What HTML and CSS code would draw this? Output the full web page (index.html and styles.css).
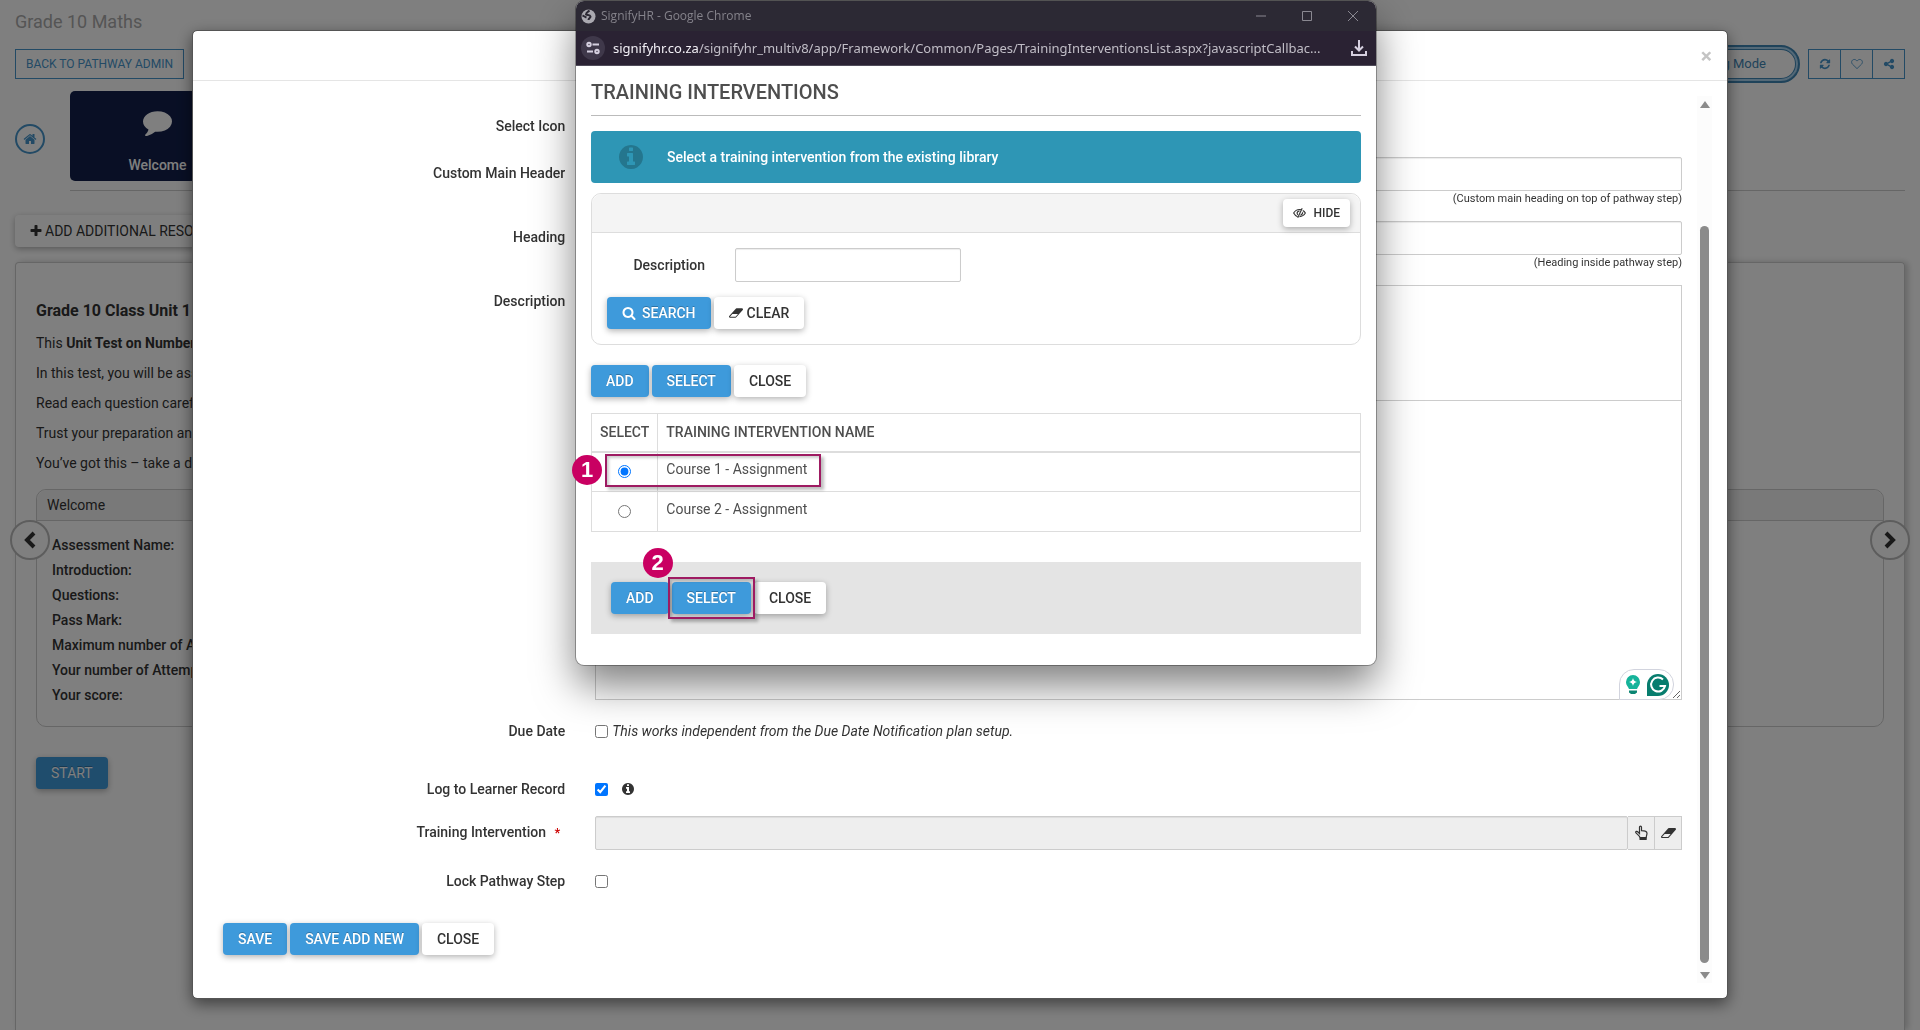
FILE: index.html
```html
<!DOCTYPE html>
<html lang="en">
<head>
    <meta charset="UTF-8">
    <meta name="viewport" content="width=device-width, initial-scale=1.0">
    <title>Grade 10 Maths</title>
    <link rel="stylesheet" href="styles.css">
</head>
<body>
    <!-- shared icons -->
    <svg class="sprite" aria-hidden="true">
        <symbol id="home" viewBox="0 0 1792 1792"><path d="M1472 992v480q0 26-19 45t-45 19h-384v-384h-256v384h-384q-26 0-45-19t-19-45v-480q0-1 .5-3t.5-3l575-474 575 474q1 2 1 6zm223-69l-62 74q-8 9-21 11h-3q-13 0-21-7l-692-577-692 577q-12 8-24 7-13-2-21-11l-62-74q-8-10-7-23.5t11-21.5l719-599q32-26 76-26t76 26l244 204v-195q0-14 9-23t23-9h192q14 0 23 9t9 23v408l219 182q10 8 11 21.5t-7 23.5z"/></symbol>
        <symbol id="comment" viewBox="0 0 1792 1792"><path d="M1792 896q0 174-120 321.5t-326 233-450 85.5q-70 0-145-8-198 175-460 242-49 14-114 22-17 2-30.5-9t-17.5-29v-1q-3-4-.5-12t2-10 4.5-9.5l6-9 7-8.5 8-9q7-8 31-34.5t34.5-38 31-39.5 32.5-51 27-59 26-76q-157-89-247.5-220t-90.5-281q0-130 71-248.5t191-204.5 286-136.5 348-50.5q244 0 450 85.5t326 233 120 321.5z"/></symbol>
        <symbol id="plus" viewBox="0 0 1792 1792"><path d="M1600 736v192q0 40-28 68t-68 28h-416v416q0 40-28 68t-68 28h-192q-40 0-68-28t-28-68v-416h-416q-40 0-68-28t-28-68v-192q0-40 28-68t68-28h416v-416q0-40 28-68t68-28h192q40 0 68 28t28 68v416h416q40 0 68 28t28 68z"/></symbol>
        <symbol id="info" viewBox="0 0 1792 1792"><path d="M1152 1376v-160q0-14-9-23t-23-9h-96v-512q0-14-9-23t-23-9h-320q-14 0-23 9t-9 23v160q0 14 9 23t23 9h96v320h-96q-14 0-23 9t-9 23v160q0 14 9 23t23 9h448q14 0 23-9t9-23zm-128-896v-160q0-14-9-23t-23-9h-192q-14 0-23 9t-9 23v160q0 14 9 23t23 9h192q14 0 23-9t9-23zm640 416q0 209-103 385.5t-279.5 279.5-385.5 103-385.5-103-279.5-279.5-103-385.5 103-385.5 279.5-279.5 385.5-103 385.5 103 279.5 279.5 103 385.5z"/></symbol>
        <symbol id="search" viewBox="0 0 1792 1792"><path d="M1216 832q0-185-131.5-316.5t-316.5-131.5-316.5 131.5-131.5 316.5 131.5 316.5 316.5 131.5 316.5-131.5 131.5-316.5zm512 832q0 52-38 90t-90 38q-54 0-90-38l-343-342q-179 124-399 124-143 0-273.5-55.5t-225-150-150-225-55.5-273.5 55.5-273.5 150-225 225-150 273.5-55.5 273.5 55.5 225 150 150 225 55.5 273.5q0 220-124 399l343 343q37 37 37 90z"/></symbol>
        <symbol id="eraser" viewBox="0 0 1920 1792"><path d="M896 1408l336-384h-768l-336 384h768zm1013-1077q15 34 9.5 71.5t-30.5 65.5l-896 1024q-38 44-96 44h-768q-38 0-69.5-20.5t-47.5-54.5q-15-34-9.5-71.5t30.5-65.5l896-1024q38-44 96-44h768q38 0 69.5 20.5t47.5 54.5z"/></symbol>
        <symbol id="refresh" viewBox="0 0 1792 1792"><path d="M1639 1056q0 5-1 7-64 268-268 434.5t-478 166.5q-146 0-282.5-55t-243.5-157l-129 129q-19 19-45 19t-45-19-19-45v-448q0-26 19-45t45-19h448q26 0 45 19t19 45-19 45l-137 137q71 66 161 102t187 36q134 0 250-65t186-179q11-17 53-117 8-23 30-23h192q13 0 22.5 9.5t9.5 22.5zm25-800v448q0 26-19 45t-45 19h-448q-26 0-45-19t-19-45 19-45l138-138q-148-137-349-137-134 0-250 65t-186 179q-11 17-53 117-8 23-30 23h-199q-13 0-22.5-9.5t-9.5-22.5v-7q65-268 270-434.5t480-166.5q146 0 284 55.5t245 156.5l130-129q19-19 45-19t45 19 19 45z"/></symbol>
        <symbol id="heart" viewBox="0 0 14 14"><path d="M7 12.4L1.6 7.1C.1 5.500.4 2 3.700 1.700 5.300 1.600 6.300 2.700 7 3.600 7.700 2.700 8.700 1.600 10.300 1.700 13.600 2 13.900 5.500 12.400 7.100z" fill="none" stroke="currentColor"/></symbol>
        <symbol id="share" viewBox="0 0 1792 1792"><path d="M1344 1024q133 0 226.5 93.5t93.5 226.5-93.5 226.5-226.5 93.5-226.5-93.5-93.5-226.5q0-12 2-34l-360-180q-92 86-218 86-133 0-226.5-93.5t-93.5-226.5 93.5-226.5 226.5-93.5q126 0 218 86l360-180q-2-22-2-34 0-133 93.5-226.5t226.500-93.500 226.500 93.500 93.500 226.500-93.500 226.500-226.500 93.500q-126 0-218-86l-360 180q2 22 2 34t-2 34l360 180q92-86 218-86z"/></symbol>
        <symbol id="eye" viewBox="0 0 14 12"><g fill="none" stroke="currentColor"><path d="M5 10C3.200 9.300 1.800 8.100.700 6 2.200 3.500 4.400 2.200 7 2.200c.8 0 1.300.1 2 .3M10.500 3.300C11.700 3.900 12.600 4.800 13.300 6c-1.500 2.500-3.700 3.800-6.300 3.900" stroke-width="1.200"/><path d="M9.900 1L5.100 11" stroke-width="1.200"/><path d="M5.300 8C3.800 6.600 4.200 4.200 7 3.700M10.400 5.200C10.400 7 9.300 8.100 8 8.400" stroke-width="1.300"/></g></symbol>
        <symbol id="hand" viewBox="0 0 14 16"><path d="M5 8.600V2.300C5 .8 7 .8 7 2.300v3.300c2.200 0 5.400.5 5.500 2.600 0 1.600-.8 2.700-.8 4.500H5.600C5.200 10.700 2.500 9.300 1.300 7.700.8 6.300 2.500 5.800 3.500 7z" fill="none" stroke="currentColor" stroke-width="1.200"/><path d="M5 12.400h7.200V15H5z"/></symbol>
        <symbol id="chevron" viewBox="0 0 14 18"><path d="M11 2L4 9l7 7" fill="none" stroke="currentColor" stroke-width="4"/></symbol>
    </svg>

    <main class="page">
        <h1 class="page-title">Grade 10 Maths</h1>
        <div class="toolbar">
            <div class="toolbar-group">
                <button type="button" class="btn-outline">BACK TO PATHWAY ADMIN</button>
                <button type="button" class="btn-outline">EDIT</button>
            </div>
            <div class="toolbar-group">
                <button type="button" class="btn-mode">Editing Mode</button>
                <div class="icon-group">
                    <button type="button" aria-label="Refresh"><svg class="icon"><use href="#refresh"/></svg></button>
                    <button type="button" aria-label="Favourite"><svg class="icon"><use href="#heart"/></svg></button>
                    <button type="button" aria-label="Share"><svg class="icon"><use href="#share"/></svg></button>
                </div>
            </div>
        </div>

        <div class="steps">
            <a href="#" class="home-link" aria-label="Home"><svg class="icon-lg"><use href="#home"/></svg></a>
            <div class="step-list">
                <a href="#" class="step">
                    <svg class="step-icon"><use href="#comment"/></svg>
                    <span>Welcome</span>
                </a>
            </div>
        </div>

        <button type="button" class="btn btn-resource"><svg class="icon"><use href="#plus"/></svg>ADD ADDITIONAL RESOURCES</button>

        <section class="content">
            <h2>Grade 10 Class Unit 1</h2>
            <p>This <b>Unit Test on Numbers</b></p>
            <p>In this test, you will be assessed</p>
            <p>Read each question carefully</p>
            <p>Trust your preparation and</p>
            <p>You’ve got this – take a deep</p>
            <div class="card">
                <div class="card-head">Welcome</div>
                <ul>
                    <li>Assessment Name:</li>
                    <li>Introduction:</li>
                    <li>Questions:</li>
                    <li>Pass Mark:</li>
                    <li>Maximum number of Attempts:</li>
                    <li>Your number of Attempts:</li>
                    <li>Your score:</li>
                </ul>
            </div>
            <button type="button" class="btn btn-primary btn-start">START</button>
        </section>
        <button type="button" class="pager prev" aria-label="Previous"><svg><use href="#chevron"/></svg></button>
        <button type="button" class="pager next" aria-label="Next"><svg><use href="#chevron"/></svg></button>
    </main>

    <div class="overlay">
        <div class="modal" role="dialog">
            <div class="modal-header"><button type="button" class="modal-close" aria-label="Dismiss">×</button></div>
            <div class="modal-body">
                <form>
                    <div class="form-row icon-row">
                        <span class="label">Select Icon</span>
                    </div>
                    <div class="form-row">
                        <label class="label" for="main-header">Custom Main Header</label>
                        <div class="field">
                            <input type="text" id="main-header">
                            <small>(Custom main heading on top of pathway step)</small>
                        </div>
                    </div>
                    <div class="form-row">
                        <label class="label" for="heading">Heading</label>
                        <div class="field">
                            <input type="text" id="heading">
                            <small>(Heading inside pathway step)</small>
                        </div>
                    </div>
                    <div class="form-row">
                        <label class="label" for="description">Description</label>
                        <div class="field editor">
                            <div class="editor-bar"></div>
                            <textarea id="description"></textarea>
                            <div class="writing-badge">
                                <svg width="16" height="20" viewBox="0 0 16 20"><path d="M8 0a7 7 0 0 0-7 7.300c0 3 2 4.200 3 6.700h8c1-2.500 3-3.700 3-6.700A7 7 0 0 0 8 0z" fill="#15b39a"/><path d="M8 3q.6 3.400 4 4-3.400.6-4 4-.6-3.400-4-4 3.400-.6 4-4z" fill="#fff"/><path d="M4 15.500h8v2l-2 1.500H6l-2-1.500z" fill="#0b8573"/></svg>
                                <svg width="22" height="22" viewBox="0 0 22 22"><path d="M0 22V11A11 11 0 1 1 11 22z" fill="#077d6e"/><path d="M16 5.500A7 7 0 1 0 18 12h-5.500" fill="none" stroke="#fff" stroke-width="2"/></svg>
                            </div>
                        </div>
                    </div>
                    <div class="form-row due-row">
                        <label class="label" for="due">Due Date</label>
                        <div class="field inline">
                            <input type="checkbox" id="due">
                            <em>This works independent from the Due Date Notification plan setup.</em>
                        </div>
                    </div>
                    <div class="form-row log-row">
                        <label class="label" for="log">Log to Learner Record</label>
                        <div class="field inline">
                            <input type="checkbox" id="log" checked>
                            <svg class="icon info-icon"><use href="#info"/></svg>
                        </div>
                    </div>
                    <div class="form-row">
                        <label class="label" for="intervention">Training Intervention <span class="required">*</span></label>
                        <div class="field input-group">
                            <input type="text" id="intervention" readonly>
                            <button type="button" aria-label="Choose"><svg class="icon-lg"><use href="#hand"/></svg></button>
                            <button type="button" aria-label="Erase"><svg class="icon-lg"><use href="#eraser"/></svg></button>
                        </div>
                    </div>
                    <div class="form-row due-row">
                        <label class="label" for="lock">Lock Pathway Step</label>
                        <div class="field inline"><input type="checkbox" id="lock"></div>
                    </div>
                    <div class="btn-row form-actions">
                        <button type="button" class="btn btn-primary">SAVE</button>
                        <button type="button" class="btn btn-primary">SAVE ADD NEW</button>
                        <button type="button" class="btn">CLOSE</button>
                    </div>
                </form>
                <div class="scrollbar" aria-hidden="true">
                    <i class="arrow up"></i>
                    <i class="thumb"></i>
                    <i class="arrow down"></i>
                </div>
            </div>
        </div>
    </div>

    <div class="popup">
        <div class="titlebar">
            <svg width="15" height="15" viewBox="0 0 15 15"><circle cx="7.500" cy="7.500" r="7" fill="#aaa9b0"/><path d="M8.500 1.500C6.500 3 5 3.500 5 5.500c1.500 1 4-.2 4.500 2 .3 1.500-2 1.500-2 3.500M1.500 6.500C3 7 4 8 5.500 8.500" fill="none" stroke="#2b2833" stroke-width="2"/></svg>
            <span class="window-name">SignifyHR - Google Chrome</span>
            <div class="window-controls">
                <svg viewBox="0 0 10 10"><path d="M0 5h10"/></svg>
                <svg viewBox="0 0 10 10"><path d="M.5.5h9v9h-9z"/></svg>
                <svg viewBox="0 0 10 10"><path d="M0 0l10 10M10 0L0 10"/></svg>
            </div>
        </div>
        <div class="urlbar">
            <span class="site-icon"><svg width="14" height="14" viewBox="0 0 14 14"><path d="M6.500 3.500H13M1 10.500h6" /><circle cx="3" cy="3.500" r="1.700"/><circle cx="11" cy="10.500" r="1.700"/></svg></span>
            <span class="url"><b>signifyhr.co.za</b>/signifyhr_multiv8/app/Framework/Common/Pages/TrainingInterventionsList.aspx?javascriptCallbac...</span>
            <svg class="download" width="16" height="16" viewBox="0 0 16 16"><path d="M8 0v10M4 6.500l4 4 4-4M1 11v4h14v-4"/></svg>
        </div>

        <div class="popup-body">
            <h2>TRAINING INTERVENTIONS</h2>
            <div class="banner">
                <svg><use href="#info"/></svg>
                <span>Select a training intervention from the existing library</span>
            </div>

            <div class="filter">
                <div class="filter-head">
                    <button type="button" class="btn btn-small"><svg class="icon"><use href="#eye"/></svg>HIDE</button>
                </div>
                <div class="filter-body">
                    <div class="filter-field">
                        <label for="filter-description">Description</label>
                        <input type="text" id="filter-description">
                    </div>
                    <div class="btn-row">
                        <button type="button" class="btn btn-primary btn-search"><svg class="icon"><use href="#search"/></svg>SEARCH</button>
                        <button type="button" class="btn btn-clear"><svg class="icon"><use href="#eraser"/></svg>CLEAR</button>
                    </div>
                </div>
            </div>

            <div class="btn-row list-actions">
                <button type="button" class="btn btn-primary">ADD</button>
                <button type="button" class="btn btn-primary">SELECT</button>
                <button type="button" class="btn">CLOSE</button>
            </div>

            <div class="table-wrap">
                <table>
                    <thead>
                        <tr><th>SELECT</th><th>TRAINING INTERVENTION NAME</th></tr>
                    </thead>
                    <tbody>
                        <tr>
                            <td class="pick"><input type="radio" name="course" id="course1" checked></td>
                            <td><label for="course1">Course 1 - Assignment</label></td>
                        </tr>
                        <tr>
                            <td class="pick"><input type="radio" name="course" id="course2"></td>
                            <td><label for="course2">Course 2 - Assignment</label></td>
                        </tr>
                    </tbody>
                </table>
                <div class="marker marker-row"></div>
                <span class="badge badge-row">1</span>
            </div>

            <div class="btn-row popup-footer">
                <button type="button" class="btn btn-primary">ADD</button>
                <div class="marked">
                    <button type="button" class="btn btn-primary">SELECT</button>
                    <div class="marker marker-select"></div>
                    <span class="badge badge-select">2</span>
                </div>
                <button type="button" class="btn">CLOSE</button>
            </div>
        </div>
    </div>
</body>
</html>
```

FILE: styles.css
```css
* { box-sizing: border-box; }

body {
    margin: 0;
    height: 100vh;
    overflow: hidden;
    font-family: Roboto, "Liberation Sans", sans-serif;
    font-size: 14px;
    line-height: 20px;
    color: #333;
    background: #fff;
}

button, input, textarea {
    font: inherit;
    color: inherit;
}
button { cursor: pointer; }
h1, h2, p, ul { margin: 0; padding: 0; }
a { text-decoration: none; }

.sprite { position: absolute; width: 0; height: 0; }
svg { fill: currentColor; flex: none; }
.icon { width: 14px; height: 14px; }
.icon-lg { width: 16px; height: 16px; }

/* buttons */
.btn {
    display: inline-flex;
    align-items: center;
    height: 32px;
    padding: 0 15px;
    border: none;
    border-radius: 4px;
    background: #fff;
    color: #333;
    white-space: nowrap;
    font-weight: 500;
    box-shadow: 0 2px 6px rgba(0, 0, 0, 0.3);
}
.btn-primary {
    background: #3e9adb;
    color: #fff;
    text-shadow: 0 -1px 0 rgba(0, 0, 0, 0.25);
}
.btn-row { display: flex; gap: 3px; }
.btn-small {
    height: 28px;
    padding: 0 10px;
    gap: 7px;
    font-size: 12px;
}
.btn-small .icon { width: 13px; }
.btn-clear { gap: 4px; }
.btn-search { gap: 6px; }

/* page behind the dialog */
.page {
    position: relative;
    height: 100%;
    display: flex;
    flex-direction: column;
    padding: 7px 15px 0;
}
.page-title {
    font-size: 18px;
    line-height: 30px;
    font-weight: 400;
    color: #aaa;
}
.toolbar {
    display: flex;
    justify-content: space-between;
    margin-top: 8px;
    height: 38px;
    align-items: center;
}
.toolbar-group { display: flex; align-items: center; gap: 8px; }
.btn-outline {
    height: 30px;
    padding: 0 10px;
    border: 1px solid #4695cb;
    background: none;
    color: #4695cb;
    font-size: 12px;
}
.btn-mode {
    height: 38px;
    padding: 0 32px;
    border: 2px solid #3f86b5;
    border-radius: 19px;
    background: none;
    color: #3f86b5;
    box-shadow: inset 0 0 0 2px #a9d2ee, inset 0 0 0 3px #3f86b5;
    font-size: 13px;
}
.icon-group { display: flex; border: 1px solid #4695cb; }
.icon-group button {
    display: flex;
    align-items: center;
    justify-content: center;
    width: 32px;
    height: 28px;
    padding: 0;
    border: none;
    background: none;
    color: #4695cb;
}
.icon-group svg { width: 12px; height: 12px; }
.icon-group button:first-child { width: 31px; }
.icon-group button + button { border-left: 1px solid #4695cb; }

.steps { display: flex; margin-top: 8px; gap: 25px; }
.home-link {
    display: flex;
    align-items: center;
    justify-content: center;
    width: 30px;
    height: 30px;
    margin-top: 33px;
    border: 2px solid #4695cb;
    border-radius: 50%;
    color: #4695cb;
}
.home-link svg { width: 14px; height: 14px; }
.step-list { flex: 1; padding-bottom: 9px; border-bottom: 1px solid #ccc; }
.step {
    display: flex;
    flex-direction: column;
    align-items: center;
    width: 175px;
    height: 90px;
    padding-top: 16px;
    border-radius: 5px;
    background: #121f4b;
    color: #fff;
    font-weight: 500;
}
.step-icon { width: 29px; height: 29px; margin-bottom: 19px; }

.btn-resource {
    align-self: flex-start;
    margin-top: 24px;
    padding: 0 14px;
    gap: 2px;
    font-weight: 400;
}

.content {
    flex: 1;
    margin-top: 15px;
    padding: 38px 20px 0;
    border: 1px solid #ccc;
    border-bottom: none;
    border-radius: 4px 4px 0 0;
    box-shadow: 3px 0 6px rgba(0, 0, 0, 0.2);
}
.content h2 {
    margin-bottom: 12px;
    font-size: 16px;
    font-weight: 700;
}
.content p { margin-bottom: 10px; }
.content b { font-weight: 700; }
.card {
    height: 238px;
    margin: 16px 0 30px;
    border: 1px solid #ccc;
    border-radius: 10px;
}
.card-head {
    padding: 5px 10px;
    border-bottom: 1px solid #ccc;
    border-radius: 10px 10px 0 0;
    background: #f3f3f3;
}
.card ul { padding: 12px 15px; list-style: none; }
.card li { line-height: 25px; font-weight: 500; }
.btn-start { font-weight: 400; }

.pager {
    position: absolute;
    top: 520px;
    display: flex;
    align-items: center;
    justify-content: center;
    width: 40px;
    height: 40px;
    padding: 0;
    border: 2px solid #bbb;
    border-radius: 50%;
    background: #fff;
}
.pager svg { width: 14px; height: 18px; }
.prev { left: 10px; }
.next { right: 10px; }
.next svg { transform: scaleX(-1); }

/* dialog */
.overlay {
    position: fixed;
    inset: 0;
    padding-top: 30px;
    background: rgba(0, 0, 0, 0.5);
}
.modal {
    width: 80%;
    margin: 0 auto;
    border: 1px solid #555;
    border-radius: 5px;
    background: #fff;
    background-clip: padding-box;
    box-shadow: 0 5px 15px rgba(0, 0, 0, 0.5);
}
.modal-header {
    display: flex;
    align-items: center;
    justify-content: flex-end;
    height: 50px;
    padding: 0 15px;
    border-bottom: 1px solid #e5e5e5;
}
.modal-close {
    padding: 0;
    border: none;
    background: none;
    color: #c4c4c4;
    font-size: 21px;
    font-weight: 700;
}
.modal-body { display: flex; padding: 15px; }
form { flex: 1; padding: 14px 0 28px; }
.form-row { display: flex; margin-bottom: 15px; }
.icon-row { min-height: 32px; }
.due-row { min-height: 43px; }
.log-row { margin-bottom: 11px; }
.label {
    width: 25%;
    padding: 6px 15px 0;
    text-align: right;
    font-weight: 500;
}
.required { padding: 0 5px; color: #c00; font-size: 13px; }
.field { position: relative; width: 75%; padding: 0 15px; }
input[type="text"] {
    display: block;
    width: 100%;
    height: 34px;
    border: 1px solid #ccc;
    border-radius: 2px;
    box-shadow: inset 0 1px 1px rgba(0, 0, 0, 0.075);
}
small {
    display: block;
    font-size: 11px;
    line-height: 15px;
    text-align: right;
}
.editor-bar {
    height: 115px;
    border: 1px solid #ccc;
    border-bottom: none;
}
textarea {
    display: block;
    width: 100%;
    height: 300px;
    border: 1px solid #ccc;
    resize: vertical;
}
.writing-badge {
    position: absolute;
    right: 23px;
    bottom: 0;
    display: flex;
    align-items: center;
    gap: 6px;
    height: 31px;
    padding: 0 4px 0 5px;
    border: 1px solid #d2d4de;
    border-radius: 15px 15px 15px 0;
    background: #fff;
}
.inline { display: flex; align-items: center; height: 32px; gap: 4px; }
input[type="checkbox"], input[type="radio"] {
    width: 13px;
    height: 13px;
    margin: 0;
}
.info-icon { margin-left: 9px; }
.input-group { display: flex; }
.input-group input[type="text"] { background: #eee; }
.input-group button {
    display: flex;
    align-items: center;
    justify-content: center;
    width: 27px;
    padding: 0;
    border: 1px solid #ccc;
    border-left: none;
    background: #eee;
    flex: none;
}
.input-group svg { width: 15px; }
.form-actions { padding-left: 15px; }

.scrollbar {
    display: flex;
    flex-direction: column;
    align-items: center;
    width: 15px;
    padding: 5px 0 4px;
    background: #fcfcfc;
}
.thumb {
    flex: 1;
    width: 9px;
    margin: 118px 0 9px;
    border-radius: 5px;
    background: #8b8b8b;
}
.arrow {
    border: 5px solid transparent;
    border-top-width: 0;
    border-bottom: 7px solid #8b8b8b;
}
.down { transform: rotate(180deg); }

/* popup window */
.popup {
    position: fixed;
    top: 1px;
    left: 30%;
    width: 800px;
    border-radius: 8px;
    background: #fff;
    box-shadow: 0 0 0 1px rgba(0, 0, 0, 0.3), 0 20px 40px rgba(0, 0, 0, 0.5);
}
.titlebar {
    display: flex;
    align-items: center;
    height: 30px;
    padding: 0 18px 0 5px;
    gap: 5px;
    border-radius: 8px 8px 0 0;
    background: #2c2934;
    color: #85838b;
    font: 12px/16px "Open Sans", sans-serif;
}
.window-controls { display: flex; gap: 36px; margin-left: auto; }
.window-controls svg {
    width: 10px;
    height: 10px;
    fill: none;
    stroke: #8a8891;
}
.urlbar {
    display: flex;
    align-items: center;
    height: 35px;
    padding: 0 9px 0 5px;
    border-bottom: 1px solid #504c5a;
    background: #2a2233;
    color: #c0bdc6;
    font: 13px/18px "Noto Sans", sans-serif;
}
.url { margin-left: 8px; white-space: nowrap; }
.url b { font-weight: 400; color: #f1eff5; }
.site-icon {
    display: flex;
    align-items: center;
    justify-content: center;
    width: 24px;
    height: 24px;
    border-radius: 50%;
    background: #3f384a;
}
.site-icon svg, .download {
    fill: none;
    stroke: #d6d0e0;
    stroke-width: 2;
}
.download { margin-left: auto; }

.popup-body { padding: 0 15px 31px; }
.popup-body h2 {
    padding: 10px 0 7px;
    border-bottom: 1px solid #bbb;
    color: #4e4e4e;
    font-size: 20px;
    line-height: 32px;
    font-weight: 500;
}
.banner {
    display: flex;
    align-items: center;
    height: 52px;
    margin: 15px 0 10px;
    padding: 0 26px;
    gap: 22px;
    border-radius: 4px;
    background: #2e96b5;
    color: #fff;
    font-weight: 500;
}
.banner svg { width: 28px; height: 28px; color: #24768e; }

.filter { border: 1px solid #ddd; border-radius: 10px; }
.filter-head {
    display: flex;
    align-items: center;
    justify-content: flex-end;
    height: 39px;
    padding: 0 10px;
    border-bottom: 1px solid #ddd;
    border-radius: 10px 10px 0 0;
    background: #f4f4f4;
}
.filter-body { padding: 15px; }
.filter-field {
    display: flex;
    align-items: center;
    margin-bottom: 15px;
    gap: 30px;
}
.filter-field label { width: 98px; text-align: right; font-weight: 500; }
.filter-field input[type="text"] { width: 226px; }

.list-actions { margin: 20px 0 16px; }
.table-wrap { position: relative; }
table {
    width: 100%;
    border-collapse: collapse;
    color: #4e4e4e;
}
th, td {
    height: 40px;
    padding: 0 8px;
    border: 1px solid #ddd;
    text-align: left;
}
th { height: 38px; border-bottom-width: 2px; font-weight: 500; }
th:first-child { width: 66px; }
td { padding-bottom: 6px; }
td.pick { padding: 0; text-align: center; }
td.pick input { display: block; margin: 0 auto; }

.popup-footer {
    margin-top: 30px;
    padding: 20px;
    background: #e4e4e4;
}
.marked { position: relative; }
.marker {
    position: absolute;
    border: 2px solid #9e1b62;
    box-shadow: 3px 3px 3px rgba(0, 0, 0, 0.25), inset 2px 2px 3px rgba(0, 0, 0, 0.2);
    pointer-events: none;
}
.marker-row { left: 14px; top: 41px; width: 216px; height: 33px; }
.marker-select { inset: -5px -4px; }
.badge {
    position: absolute;
    display: flex;
    align-items: center;
    justify-content: center;
    width: 30px;
    height: 30px;
    border-radius: 50%;
    background: #c90062;
    color: #fff;
    font: 700 22px/30px "Liberation Sans", sans-serif;
}
.badge-row { left: -19px; top: 42px; }
.badge-select { left: -29px; top: -34px; }
```
